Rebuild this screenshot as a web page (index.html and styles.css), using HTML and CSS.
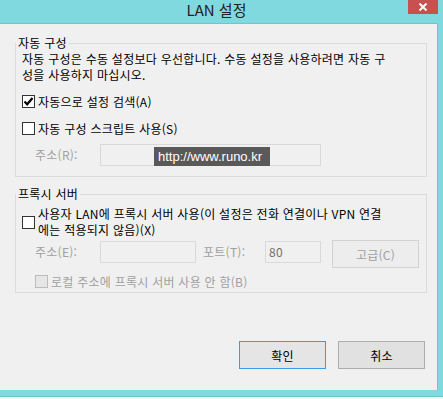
FILE: index.html
```html
<!DOCTYPE html>
<html lang="ko">
<head>
    <meta charset="UTF-8">
    <meta name="viewport" content="width=device-width, initial-scale=1.0">
    <title>LAN 설정</title>
    <link rel="stylesheet" href="styles.css">
</head>
<body>
    <div class="window">
        <div class="titlebar">
            <span></span>
            <span class="title">LAN 설정</span>
            <span class="controls">
                <span class="close">
                    <svg width="10" height="8" viewBox="0 0 10 8">
                        <path d="M1.5 0.5 L8.5 7.5 M8.5 0.5 L1.5 7.5" stroke="#fff" stroke-width="2" fill="none"/>
                    </svg>
                </span>
            </span>
        </div>

        <div class="client">
            <fieldset class="group">
                <legend>자동 구성</legend>
                <div class="group-body auto-body">
                    <p class="desc">자동 구성은 수동 설정보다 우선합니다. 수동 설정을 사용하려면 자동 구<br>성을 사용하지 마십시오.</p>

                    <label class="check-row first-check">
                        <span class="box">
                            <svg width="11" height="11" viewBox="0 0 11 11">
                                <path d="M1.5 5.5 L4.2 8.3 L9.5 2" stroke="#000" stroke-width="2.2" fill="none"/>
                            </svg>
                        </span>
                        <span>자동으로 설정 검색(A)</span>
                    </label>

                    <label class="check-row">
                        <span class="box"></span>
                        <span>자동 구성 스크립트 사용(S)</span>
                    </label>

                    <div class="field-row url-row">
                        <span class="field-label">주소(R):</span>
                        <span class="input input-url">
                            <span class="watermark">http://www.runo.kr</span>
                        </span>
                    </div>
                </div>
            </fieldset>

            <fieldset class="group proxy-group">
                <legend>프록시 서버</legend>
                <div class="group-body proxy-body">
                    <label class="check-row proxy-check">
                        <span class="box"></span>
                        <span class="two-lines">사용자 LAN에 프록시 서버 사용(이 설정은 전화 연결이나 VPN 연결<br>에는 적용되지 않음)(X)</span>
                    </label>

                    <div class="field-row proxy-row">
                        <span class="field-label">주소(E):</span>
                        <span class="input input-addr"></span>
                        <span class="field-label port-label">포트(T):</span>
                        <span class="input input-port">80</span>
                        <span class="btn btn-disabled">고급(C)</span>
                    </div>

                    <label class="check-row bypass-check">
                        <span class="box box-disabled"></span>
                        <span class="muted">로컬 주소에 프록시 서버 사용 안 함(B)</span>
                    </label>
                </div>
            </fieldset>

            <div class="actions">
                <button class="btn btn-default">확인</button>
                <button class="btn">취소</button>
            </div>
        </div>

        <div class="frame-bottom"></div>
        <div class="desktop"></div>
    </div>
</body>
</html>
```

FILE: styles.css
```css
* {
    box-sizing: border-box;
}
body {
    margin: 0;
    width: 443px;
    height: 399px;
    overflow: hidden;
    background: #80d9de;
    font-family: "Noto Sans CJK KR", "Noto Sans", sans-serif;
    font-size: 12px;
    letter-spacing: 0.25px;
    color: #000;
}
.window {
    display: flex;
    flex-direction: column;
}
.titlebar {
    height: 23px;
    display: grid;
    grid-template-columns: 1fr auto 1fr;
    padding-right: 5px;
}
.title {
    font-size: 15px;
    line-height: 20px;
    margin-right: 5px;
    color: #222;
    letter-spacing: 0;
}
.controls {
    display: flex;
    justify-content: flex-end;
}
.close {
    width: 30px;
    height: 14px;
    background: #c75050;
    display: flex;
    align-items: center;
    justify-content: center;
}
.client {
    width: 438px;
    height: 367px;
    background: #f0f0f0;
    border-top: 1px solid #6cc6cd;
    border-right: 1px solid #6cc6cd;
    padding: 11px 10px 0 15px;
}
.group {
    margin: 0;
    padding: 0;
    border: 1px solid #dcdcdc;
    min-width: 0;
}
.group legend {
    padding: 0 2px;
    margin-left: 0;
    line-height: 16px;
}
.group-body {
    padding-left: 6px;
}
.auto-body {
    padding-bottom: 10px;
}
.desc {
    margin: 0;
    line-height: 16px;
}
.check-row {
    display: flex;
    align-items: center;
    gap: 3px;
    height: 20px;
    margin-top: 7px;
}
.first-check {
    margin-top: 8px;
}
.box {
    width: 13px;
    height: 13px;
    border: 1px solid #333;
    background: #fff;
    display: flex;
    align-items: center;
    justify-content: center;
    flex: none;
}
.box-disabled {
    border-color: #bcbcbc;
    background: #e6e6e6;
}
.field-row {
    display: flex;
    align-items: flex-start;
    margin-left: 13px;
    color: #a0a0a0;
}
.url-row {
    margin-top: 6px;
    align-items: center;
}
.field-label {
    width: 65px;
    line-height: 22px;
}
.input {
    height: 22px;
    border: 1px solid #d9d9d9;
    background: #f0f0f0;
    line-height: 20px;
    padding-left: 3px;
    color: #707070;
}
.input-url {
    width: 221px;
    position: relative;
}
.watermark {
    position: absolute;
    left: 53px;
    top: 2px;
    width: 116px;
    height: 19px;
    background: #595959;
    color: #fff;
    font-family: "Liberation Sans", sans-serif;
    font-size: 13px;
    letter-spacing: 0;
    line-height: 19px;
    padding-left: 4px;
}
.proxy-group {
    margin-top: 9px;
}
.proxy-body {
    padding-top: 4px;
    padding-bottom: 3px;
}
.proxy-check {
    height: 32px;
    margin-top: 0;
}
.two-lines {
    line-height: 16px;
}
.proxy-row {
    margin-top: 2px;
}
.proxy-row .field-label,
.proxy-row .input {
    margin-top: 1px;
}
.input-addr {
    width: 96px;
}
.port-label {
    width: 62px;
    margin-left: 7px;
}
.input-port {
    width: 56px;
}
.btn {
    width: 87px;
    height: 28px;
    border: 1px solid #adadad;
    background: #e1e1e1;
    font-family: inherit;
    font-size: 12px;
    letter-spacing: 0.25px;
    color: #000;
    padding: 0;
    display: flex;
    align-items: center;
    justify-content: center;
}
.btn-disabled {
    margin-left: 11px;
    border-color: #d2d2d2;
    background: #ededed;
    color: #a0a0a0;
}
.btn-default {
    border-color: #3c9be8;
    background: #e5e5e5;
}
.bypass-check {
    margin-left: 13px;
    height: 15px;
    margin-top: 6px;
}
.muted {
    color: #a0a0a0;
}
.actions {
    display: flex;
    justify-content: flex-end;
    gap: 12px;
    margin-top: 48px;
    padding-right: 2px;
}
.frame-bottom {
    height: 7px;
    border-bottom: 1px solid #70c3c8;
}
.desktop {
    height: 2px;
    background: #f4f4f4;
}
```
